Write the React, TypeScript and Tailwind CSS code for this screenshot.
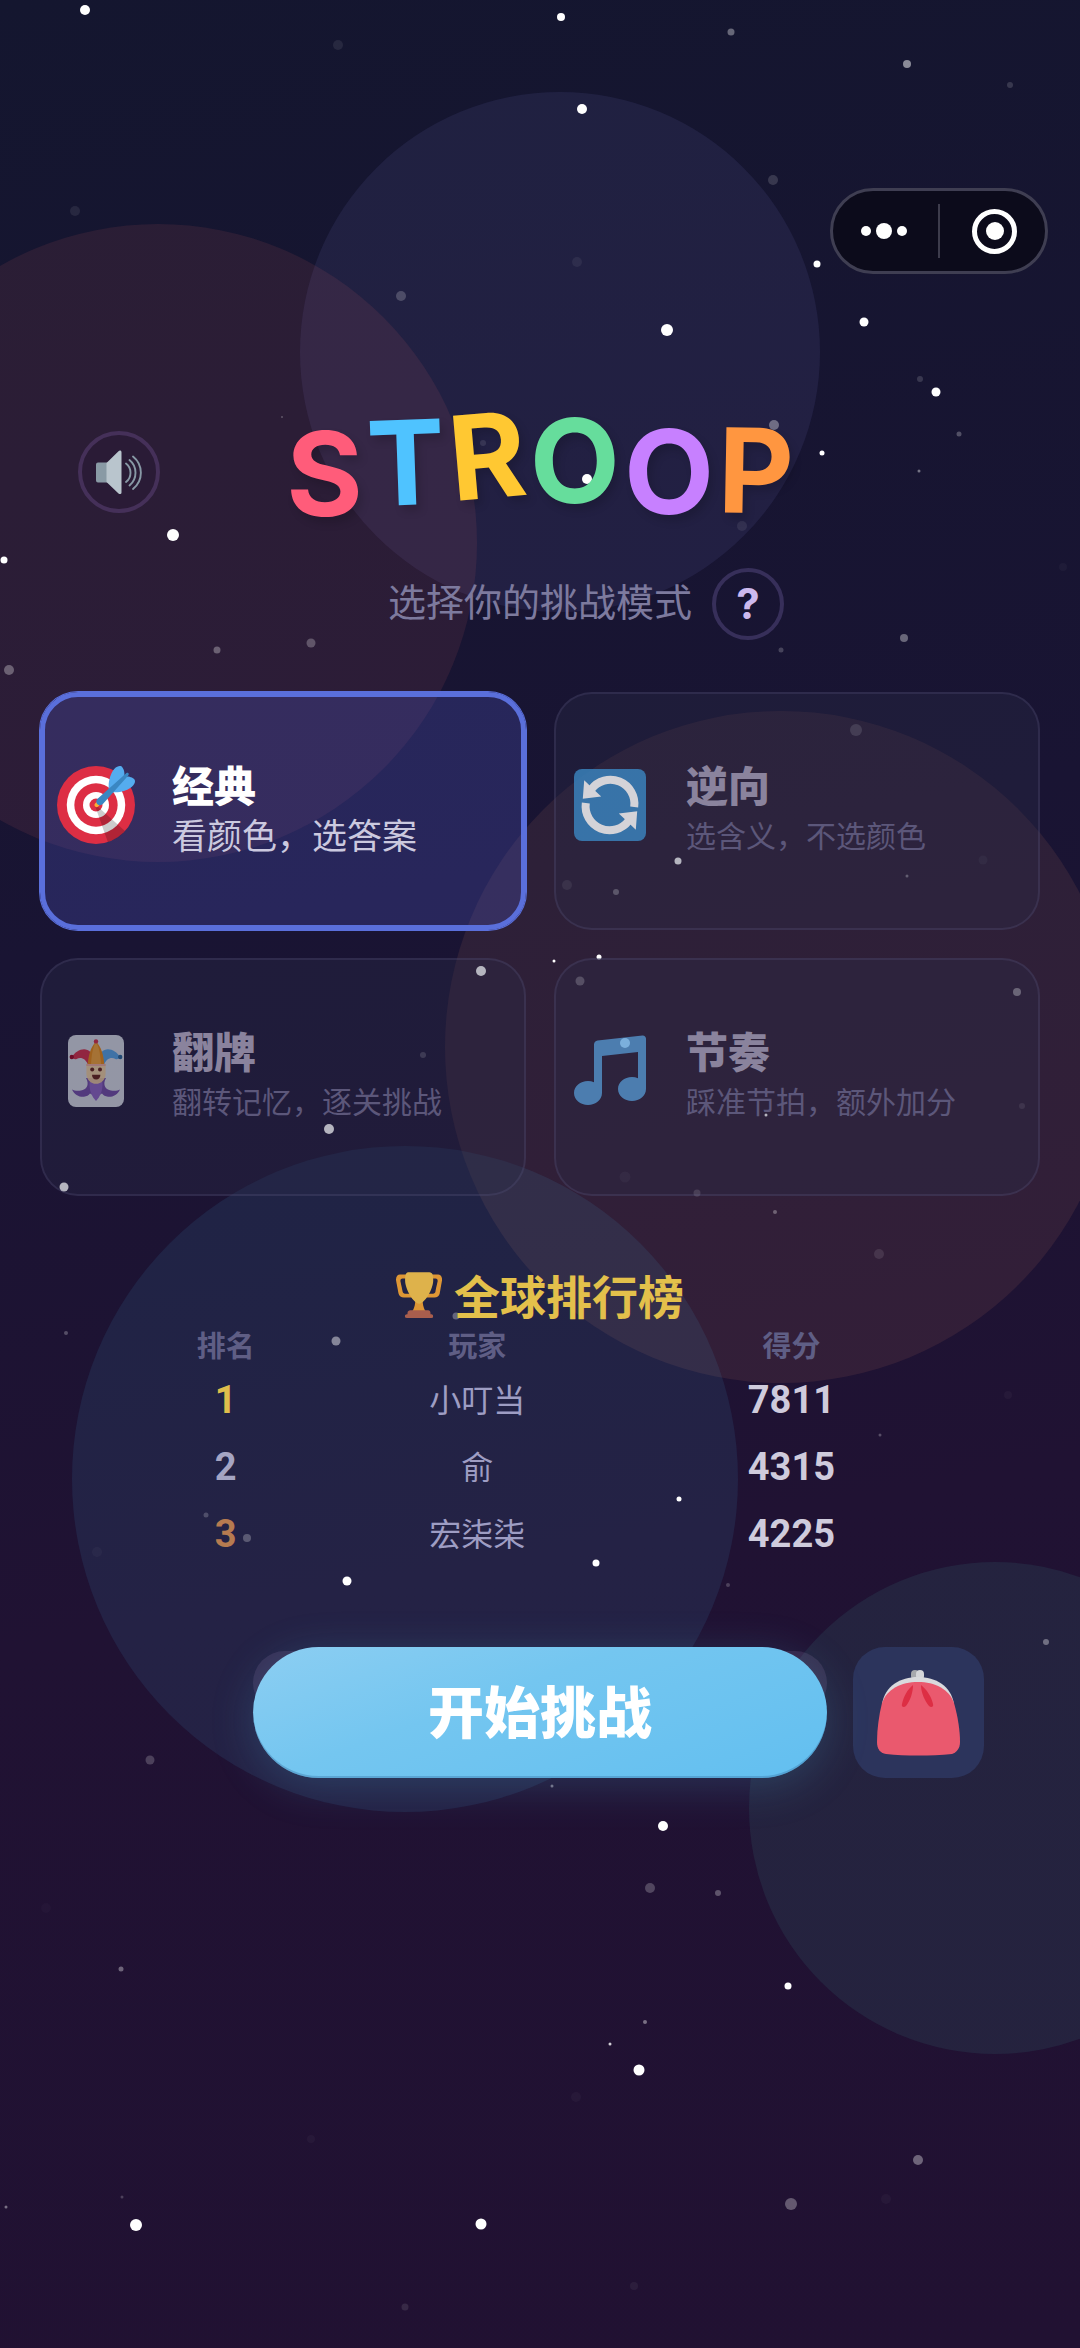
import React from 'react'

// Star positions: x, y, radius, opacity
const STARS = [
  [85, 10, 5, 1], [561, 17, 4, 1], [338, 45, 5, 0.08], [731, 32, 3.5, 0.35], [907, 64, 4, 0.5],
  [1010, 85, 3, 0.15], [582, 109, 5, 1], [773, 180, 5, 0.15], [75, 211, 5, 0.08], [577, 262, 5, 0.06],
  [817, 264, 3.5, 1], [401, 296, 5, 0.2], [667, 330, 6, 1], [864, 322, 4.5, 1], [920, 379, 3, 0.15],
  [936, 392, 4.5, 1], [959, 434, 2.5, 0.25], [919, 471, 1.5, 0.4], [822, 453, 2.5, 1], [774, 425, 5, 0.35],
  [483, 443, 3, 0.1], [282, 417, 1, 0.25], [173, 535, 6, 1], [4, 560, 3.5, 1], [587, 479, 5, 1],
  [742, 526, 5, 0.08], [311, 643, 4.5, 0.25], [217, 650, 3.5, 0.3], [9, 670, 5, 0.3], [904, 638, 4, 0.35],
  [781, 650, 2.5, 0.2], [1063, 567, 4, 0.03], [856, 730, 6, 0.18], [678, 861, 3.5, 1], [567, 885, 5, 0.1],
  [616, 892, 3, 0.35], [907, 876, 1.5, 0.4], [983, 860, 4.5, 0.05], [481, 971, 5, 1], [423, 1055, 3, 0.2],
  [329, 1129, 5, 1], [64, 1187, 4.5, 1], [554, 961, 1.5, 1], [599, 957, 2.5, 1], [580, 981, 4.5, 0.3],
  [1017, 992, 4, 0.45], [625, 1043, 5, 1], [766, 1115, 1.5, 1], [1022, 1106, 3, 0.12], [625, 1177, 5.5, 0.05],
  [697, 1193, 3.5, 0.2], [775, 1212, 2, 0.3], [879, 1254, 5, 0.1], [456, 1316, 3.5, 0.3], [336, 1341, 4.5, 0.45],
  [679, 1499, 2.5, 1], [596, 1563, 3.5, 1], [347, 1581, 4.5, 1], [247, 1538, 4, 0.25], [206, 1515, 2.5, 0.2],
  [66, 1333, 2, 0.25], [880, 1435, 1.5, 0.25], [728, 1585, 2, 0.2], [1046, 1642, 3, 0.35], [1008, 1395, 4, 0.03],
  [97, 1552, 5, 0.03], [150, 1760, 4.5, 0.2], [552, 1786, 1.5, 0.4], [663, 1826, 5, 1], [650, 1888, 5, 0.22],
  [718, 1893, 3, 0.28], [46, 1908, 5, 0.02], [121, 1969, 2.5, 0.35], [788, 1986, 3.5, 1], [645, 2022, 2, 0.4],
  [610, 2044, 1.5, 0.8], [639, 2070, 5.5, 1], [576, 2097, 5, 0.03], [311, 2139, 4, 0.03], [918, 2160, 5, 0.35],
  [791, 2204, 6, 0.3], [886, 2199, 5, 0.03], [122, 2197, 1.5, 0.2], [6, 2207, 1.5, 0.4], [136, 2225, 6, 1],
  [481, 2224, 5.5, 1], [634, 2286, 4, 0.05], [405, 2307, 3.5, 0.1]
]

const LETTERS = [
  { char: 'S', color: 'text-[#ff5c7a]', y: 1, rotate: 0 },
  { char: 'T', color: 'text-[#4fc3ff]', y: -10, rotate: -2 },
  { char: 'R', color: 'text-[#ffc832]', y: -17, rotate: -5 },
  { char: 'O', color: 'text-[#66dd9c]', y: -12, rotate: 0 },
  { char: 'O', color: 'text-[#c780ff]', y: -1, rotate: 0 },
  { char: 'P', color: 'text-[#ff9640]', y: -2, rotate: 1 }
]

const PLAYERS = [
  { rank: 1, name: '小叮当', score: 7811, color: 'text-[#dfbe4c]' },
  { rank: 2, name: '俞', score: 4315, color: 'text-[#a5a5c3]' },
  { rank: 3, name: '宏柒柒', score: 4225, color: 'text-[#b67b50]' }
]

const NightSky = () => (
  <svg
    className="absolute inset-0 h-full w-full"
    viewBox="0 0 1080 2348"
    preserveAspectRatio="xMidYMin slice"
    aria-hidden="true"
  >
    <circle cx="560" cy="352" r="260" fill="#7070b8" fillOpacity="0.13" />
    <circle cx="158" cy="543" r="319" fill="#ff6b6b" fillOpacity="0.09" />
    <circle cx="781" cy="1047" r="336" fill="#ff9a6b" fillOpacity="0.09" />
    <circle cx="405" cy="1479" r="333" fill="#4dc8ff" fillOpacity="0.09" />
    <circle cx="995" cy="1808" r="246" fill="#52d2bc" fillOpacity="0.09" />
    {STARS.map(([x, y, r, o]) => (
      <circle key={`${x}-${y}`} cx={x} cy={y} r={r} fill="#fff" fillOpacity={o} />
    ))}
  </svg>
)

const TargetIcon = () => (
  <svg viewBox="0 0 36 36" className="h-[78px] w-[78px]" aria-hidden="true">
    <circle cx="18" cy="18" r="18" fill="#DD2E44" />
    <circle cx="18" cy="18" r="13.5" fill="#FFF" />
    <circle cx="18" cy="18" r="10" fill="#DD2E44" />
    <circle cx="18" cy="18" r="6" fill="#FFF" />
    <circle cx="18" cy="18" r="3" fill="#DD2E44" />
    <path opacity=".2" d="M18.24 18.282l13.144 11.754s-2.647 3.376-7.89 5.109L17.579 18.42l.661-.138z" />
    <path fill="#FFAC33" d="M18.294 19c-.255 0-.509-.097-.704-.292-.389-.389-.389-1.018 0-1.407l.563-.563c.389-.389 1.018-.389 1.408 0 .388.389.388 1.018 0 1.407l-.564.563c-.194.195-.448.292-.703.292z" />
    <path fill="#55ACEE" d="M24.016 6.981c-.403 2.079 0 4.691 0 4.691l7.054-7.388c.291-1.454-.528-3.932-1.718-4.238-1.19-.306-4.079.803-5.336 6.935zm5.003 5.003c-2.079.403-4.691 0-4.691 0l7.388-7.054c1.454-.291 3.932.528 4.238 1.718.306 1.19-.803 4.079-6.935 5.336z" />
    <path fill="#3A87C2" d="M32.798 4.485L21.176 17.587c-.362.362-1.673.882-2.51.046-.836-.836-.419-2.08-.057-2.443L31.815 3.501s.676-.635 1.159-.152-.176 1.136-.176 1.136z" />
  </svg>
)

const ReverseIcon = () => (
  <svg viewBox="0 0 36 36" className="h-[72px] w-[72px] opacity-80" aria-hidden="true">
    <rect width="36" height="36" rx="4" fill="#3B88C3" />
    <path d="M30.1 19A12 12 0 0 0 8.6 10.2M5.9 17A12 12 0 0 0 27.4 25.8" fill="none" stroke="#FFF" strokeWidth="4" />
    <path fill="#FFF" d="M5.1 5.6L4.4 14.9l9.2-1.2-2.8-2.6zM30.9 30.4l.7-9.3-9.2 1.2 2.8 2.6z" />
  </svg>
)

const JokerIcon = () => (
  <svg viewBox="0 0 36 36" className="h-[72px] w-[72px] opacity-60" aria-hidden="true">
    <rect x="4" width="28" height="36" rx="4" fill="#E1E8ED" />
    <path fill="#DD2E44" d="M14.2 15.2C13 12 10.500 10.800 8.300 12c-1 .5-1.700-.3-2.400-1C8 7.500 12.600 5.600 15.200 8.500z" />
    <path fill="#55ACEE" d="M21.800 15.200c1.200-3.200 3.700-4.400 5.900-3.200 1 .5 1.700-.3 2.400-1-2.100-3.500-6.700-5.400-9.300-2.500z" />
    <path fill="#F4900C" d="M13.800 15.200C14.200 10 15.300 6 18 3.200c2.700 2.800 3.800 6.800 4.200 12z" />
    <path fill="#FFAC33" d="M15.500 15.200c.2-5 .9-9 2.500-12 1.600 3 2.300 7 2.500 12z" />
    <circle cx="18" cy="3.200" r="1.100" fill="#DD2E44" />
    <circle cx="5.900" cy="11" r="1.100" fill="#A0041E" />
    <circle cx="30.100" cy="11" r="1.100" fill="#226699" />
    <path fill="#744EAA" d="M13 21.500C15 25 13 27.500 10.500 27.700 8.500 28 7 27.700 6 27.200c1.200 2.600 3.500 3.900 6 3.700 1.400-.1 2.300-.7 3-1.600l3 1.600 3-1.600c.7.900 1.600 1.500 3 1.600 2.500.2 4.800-1.100 6-3.700-1 .5-2.500.8-4.500.5C23 27.500 21 25 23 21.500z" />
    <path fill="#9268CA" d="M14.800 23.500h6.400c.4 4-1.200 7.500-3.200 9.500-2-2-3.600-5.500-3.200-9.500z" />
    <path fill="#FFDC9E" opacity=".9" d="M13.200 14.500h9.600v4.700c0 3-2.200 5.200-4.800 5.200s-4.800-2.200-4.800-5.200z" />
    <path fill="#F7B5A0" d="M13.200 14.500h9.600v1H13.200z" />
    <circle cx="16.100" cy="17.200" r="1" fill="#662113" />
    <circle cx="20" cy="17.200" r="1" fill="#662113" />
    <path fill="#662113" d="M16 19.900h4.200c0 1.600-.8 2.400-2.100 2.400S16 21.500 16 19.900z" />
  </svg>
)

const NoteIcon = () => (
  <svg viewBox="0 0 36 36" className="h-[72px] w-[72px] opacity-65" aria-hidden="true">
    <path fill="#5DADEC" d="M34.209.206L11.791 2.793C10.806 2.907 10 3.811 10 4.803v18.782C9.090 23.214 8.075 23 7 23c-3.865 0-7 2.685-7 6 0 3.314 3.135 6 7 6s7-2.686 7-6V10.539l18-2.077v13.124c-.91-.372-1.925-.586-3-.586-3.865 0-7 2.685-7 6 0 3.314 3.135 6 7 6s7-2.686 7-6V1.803c0-.992-.806-1.710-1.791-1.597z" />
  </svg>
)

const TrophyIcon = () => (
  <svg viewBox="0 0 36 36" className="h-[46px] w-[46px] opacity-85" aria-hidden="true">
    <path fill="#FFAC33" d="M5.123 5h6C12.227 5 13 4.896 13 6V4c0-1.104-.773-2-1.877-2h-8c-2 0-3.583 2.125-3 5 0 0 1.791 9.375 1.917 9.958C2.373 18.500 4.164 20 6.081 20h6.958c1.105 0-.039-1.896-.039-3v-2c0 1.104-.773 2-1.877 2h-4c-1.104 0-1.833-1.042-2-2S3.539 7.667 3.539 7.667C3.206 5.750 4.018 5 5.123 5zm25.812 0h-6C23.831 5 22 4.896 22 6V4c0-1.104 1.831-2 2.935-2h8c2 0 3.584 2.125 3 5 0 0-1.633 9.419-1.771 10-.354 1.500-2.042 3-4 3h-7.146C21.914 20 22 18.104 22 17v-2c0 1.104 1.831 2 2.935 2h4c1.104 0 1.834-1.042 2-2s1.584-7.333 1.584-7.333C32.851 5.750 32.040 5 30.935 5zM20.832 22c0-6.958-2.709 0-2.709 0s-3-6.958-3 0-3.291 10-3.291 10h12.292c-.001 0-3.292-3.042-3.292-10z" />
    <path fill="#FFCC4D" d="M29.123 6.577c0 6.775-6.770 18.192-11 18.192-4.231 0-11-11.417-11-18.192 0-5.195 1-6.319 3-6.319 1.374 0 6.025-.027 8-.027l7-.001c2.917-.001 4 .684 4 6.347z" />
    <path fill="#C1694F" d="M27 33c0 1.104.227 2-.877 2h-16C9.018 35 9 34.104 9 33v-1c0-1.104 1.164-2 2.206-2h13.917c1.042 0 1.877.896 1.877 2v1z" />
    <path fill="#C1694F" d="M29 34.625c0 .76.165 1.375-1.252 1.375H8.498C7.206 36 7 35.385 7 34.625v-.25C7 33.615 7.738 33 8.498 33h19.250c.759 0 1.252.615 1.252 1.375v.25z" />
  </svg>
)

const SpeakerIcon = () => (
  <svg viewBox="0 0 46 46" className="h-[46px] w-[46px]" aria-hidden="true">
    <path fill="#899aa5" d="M0 15.500a2 2 0 0 1 2-2h11v20H2a2 2 0 0 1-2-2z" />
    <path fill="#b9c5cd" d="M10.500 14L22.500 2.200c1.200-1.200 3-.7 3 1v40.200c0 1.700-1.800 2.200-3 1L10.500 33z" />
    <g fill="none" stroke="#8899a6" strokeWidth="1.900" strokeLinecap="round">
      <path d="M30 14.500c6 4.500 6 14 0 18.500" />
      <path d="M33.500 11c8 6.500 8 19 0 25.500" />
      <path d="M37 7.500c10.500 8.500 10.500 24 0 32.500" />
    </g>
  </svg>
)

const PurseIcon = () => (
  <svg viewBox="0 0 84 86" className="h-[86px] w-[84px]" aria-hidden="true">
    <rect x="34" y="0" width="8" height="10" rx="4" fill="#a7a9ad" />
    <rect x="39" y="0" width="8" height="10" rx="4" fill="#d5d6d9" />
    <path fill="#d9dadd" d="M5 34C8 16 23 7 41 7s33 9 36 27l-6 4H11z" />
    <path fill="#ea596e" d="M5 33C10 19 24 12 41 12s31 7 36 21c4 14 6 28 6 39 0 6-3 10-8 12-22 2-46 2-66 0-6-1-9-5-9-12 0-13 2-27 5-39z" />
    <path fill="#dd2e44" d="M36 15c0 8-3 16-7 21-2 2-5 1-4-2 2-8 5-14 11-19zM44 15c0 8 4 16 8 21 2 2 5 1 4-2-2-8-6-14-12-19z" />
  </svg>
)

const MODES = [
  { id: 'classic', title: '经典', desc: '看颜色，选答案', Icon: TargetIcon },
  { id: 'reverse', title: '逆向', desc: '选含义，不选颜色', Icon: ReverseIcon },
  { id: 'flip', title: '翻牌', desc: '翻转记忆，逐关挑战', Icon: JokerIcon },
  { id: 'rhythm', title: '节奏', desc: '踩准节拍，额外加分', Icon: NoteIcon }
]

const ModeCard = ({ mode, selected, onSelect }) => {
  const { Icon, title, desc } = mode
  return (
    <button
      type="button"
      aria-pressed={selected}
      onClick={() => onSelect(mode.id)}
      className={`flex h-[238px] items-center gap-10 rounded-[38px] text-left ${
        selected
          ? 'border-[5px] border-[#5a6fdb] bg-[#4c54b8]/30 pl-[15px] ring-1 ring-[#5a6fdb]'
          : 'border-2 border-[#6c6a96]/20 bg-[#2a2a48]/35 pl-[18px]'
      }`}
    >
      <span className="flex w-[72px] shrink-0 justify-center pb-3">
        <span className="-mx-1 shrink-0"><Icon /></span>
      </span>
      <span className="flex flex-col pb-1">
        <span className={`text-[42px] leading-[50px] font-black ${selected ? 'text-white' : 'text-[#8a839d]'}`}>
          {title}
        </span>
        <span className={`leading-[50px] ${selected ? 'text-[35px] text-[#cbc9df]' : 'text-[30px] text-[#5c577a]'}`}>
          {desc}
        </span>
      </span>
    </button>
  )
}

const Leaderboard = () => (
  <section className="mt-19 px-[100px]">
    <h2 className="flex h-[50px] items-start justify-center gap-3 text-[46px] leading-[44px] font-bold text-[#e3c04b]">
      <TrophyIcon />
      全球排行榜
    </h2>
    <table className="w-full table-fixed text-center">
      <thead>
        <tr className="h-11 text-[29px] leading-[44px] text-[#5f5e85]">
          <th className="w-2/7 p-0 font-bold">排名</th>
          <th className="w-2/7 p-0 font-bold">玩家</th>
          <th className="w-3/7 p-0 font-bold">得分</th>
        </tr>
      </thead>
      <tbody>
        {PLAYERS.map(player => (
          <tr key={player.rank} className="h-[67px] leading-[40px]">
            <td className={`p-0 font-[Roboto,sans-serif] text-[38px] font-bold ${player.color}`}>{player.rank}</td>
            <td className="p-0 pb-1 text-[32px] text-[#9e9dc3]">{player.name}</td>
            <td className="p-0 font-[Roboto,sans-serif] text-[38px] font-bold text-[#cfcbdc]">{player.score}</td>
          </tr>
        ))}
      </tbody>
    </table>
  </section>
)

const App = () => {
  const [selected, setSelected] = React.useState('classic')
  const [muted, setMuted] = React.useState(false)

  return (
    <div
      lang="zh-CN"
      className="relative min-h-screen overflow-hidden bg-linear-[170deg,#14162f_0%,#191433_38%,#201233_65%,#211132_100%] font-['Noto_Sans_CJK_SC',sans-serif]"
    >
      <NightSky />

      <main className="relative pt-[188px]">
        {/* Mini program menu */}
        <div className="flex justify-end pr-8">
          <div className="flex h-[86px] w-[218px] items-center rounded-full border-[3px] border-[#3f3e52] bg-[#0c0b1b]">
            <button type="button" aria-label="更多" className="flex flex-1 items-center justify-center gap-[5px] pr-1">
              <span className="size-[10px] rounded-full bg-white" />
              <span className="size-4 rounded-full bg-white" />
              <span className="size-[10px] rounded-full bg-white" />
            </button>
            <span className="h-[54px] w-[2px] bg-[#3d3c4c]" />
            <button type="button" aria-label="关闭" className="flex flex-1 items-center justify-center pl-1">
              <span className="flex size-[45px] items-center justify-center rounded-full border-[5px] border-white">
                <span className="size-[18px] rounded-full bg-white" />
              </span>
            </button>
          </div>
        </div>

        {/* Title */}
        <header className="mt-[138px] grid h-[120px] grid-cols-[82px_1fr_82px] items-center px-[78px]">
          <button
            type="button"
            aria-label="声音"
            aria-pressed={muted}
            onClick={() => setMuted(!muted)}
            className="flex size-[82px] items-center justify-center rounded-full border-4 border-[#453059] bg-[#2a1b36]"
          >
            <SpeakerIcon />
          </button>
          <h1 className="flex justify-center gap-1 font-[Inter,sans-serif] text-[117px] leading-[117px] font-bold">
            {LETTERS.map((letter, i) => (
              <span
                key={i}
                className={`text-shadow-[4px_6px_8px_rgba(0,0,0,0.15)] ${letter.color}`}
                style={{ transform: `translateY(${letter.y}px) rotate(${letter.rotate}deg)` }}
              >
                {letter.char}
              </span>
            ))}
          </h1>
        </header>

        <div className="mt-9 grid grid-cols-[1fr_auto_1fr] items-center gap-5">
          <p className="col-start-2 pb-2 text-[38px] leading-[44px] text-[#7d7a9e]">选择你的挑战模式</p>
          <button
            type="button"
            aria-label="帮助"
            className="flex size-[72px] items-center justify-center rounded-full border-4 border-[#372f5a] font-[Inter,sans-serif] text-[42px] leading-none font-bold text-[#cdb9ee]"
          >
            ?
          </button>
        </div>

        {/* Game modes */}
        <div className="mt-13 grid grid-cols-2 gap-7 px-10">
          {MODES.map(mode => (
            <ModeCard key={mode.id} mode={mode} selected={selected === mode.id} onSelect={setSelected} />
          ))}
        </div>

        <Leaderboard />

        {/* Actions */}
        <div className="mt-20 grid grid-cols-[1fr_auto_1fr] items-center gap-[26px] pb-20">
          <div className="relative col-start-2">
            <div className="absolute inset-x-0 top-1 h-16 rounded-[44px] bg-[#b090c0]/15" />
            <button
              type="button"
              className="relative h-[131px] w-[574px] rounded-full bg-linear-[160deg,#8ccef2_0%,#74c6f0_40%,#62bff0_100%] pb-2 text-[56px] leading-none font-black text-white shadow-[0_8px_44px_rgba(79,172,220,0.22),inset_0_-2px_0_rgba(60,120,170,0.4)]"
            >
              开始挑战
            </button>
          </div>
          <button
            type="button"
            aria-label="钱包"
            className="flex size-[131px] items-center justify-center rounded-[32px] bg-[#2c345c]"
          >
            <PurseIcon />
          </button>
        </div>
      </main>
    </div>
  )
}

export default App
